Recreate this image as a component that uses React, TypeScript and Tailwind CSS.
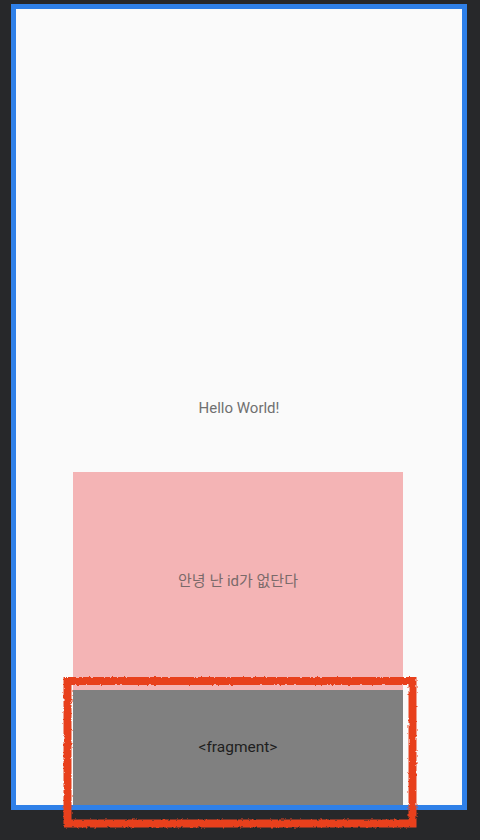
import React from "react";

export default function App() {
  return (
    <div className="relative w-[480px] h-[840px] bg-[#27282a] pl-[11px] pt-[4px] overflow-hidden">
      <div className="w-[456px] h-[806px] border-[5px] border-[#2f80e8] bg-[#fafafa] flex flex-col">
        <div className="h-[463px] pt-[388px] flex justify-center">
          <span
            className="text-[15px] leading-[22px] text-[#707070]"
            style={{ fontFamily: "Roboto, 'Noto Sans', sans-serif" }}
          >
            Hello World!
          </span>
        </div>
        <div className="ml-[57px] w-[330px] h-[218px] bg-[#f4b4b5] flex items-center justify-center">
          <span
            className="text-[15px] text-[#7a6a6a]"
            style={{ fontFamily: "Roboto, 'Noto Sans CJK KR', sans-serif" }}
          >
            안녕 난 id가 없단다
          </span>
        </div>
        <div className="ml-[57px] w-[330px] h-[115px] bg-[#808080] flex items-center justify-center">
          <span
            className="text-[15.5px] text-[#1e1e1e]"
            style={{ fontFamily: "Roboto, 'Noto Sans', sans-serif" }}
          >
            &lt;fragment&gt;
          </span>
        </div>
      </div>
      <svg
        className="absolute left-0 top-0 pointer-events-none"
        width="480"
        height="840"
        viewBox="0 0 480 840"
      >
        <defs>
          <filter id="rough" x="-10%" y="-10%" width="120%" height="120%">
            <feTurbulence type="fractalNoise" baseFrequency="0.35" numOctaves="2" seed="3" result="n" />
            <feDisplacementMap in="SourceGraphic" in2="n" scale="3" xChannelSelector="R" yChannelSelector="G" />
          </filter>
        </defs>
        <rect
          x="67.5"
          y="681"
          width="345"
          height="142.5"
          fill="none"
          stroke="#e8401e"
          strokeWidth="8"
          filter="url(#rough)"
        />
      </svg>
    </div>
  );
}
